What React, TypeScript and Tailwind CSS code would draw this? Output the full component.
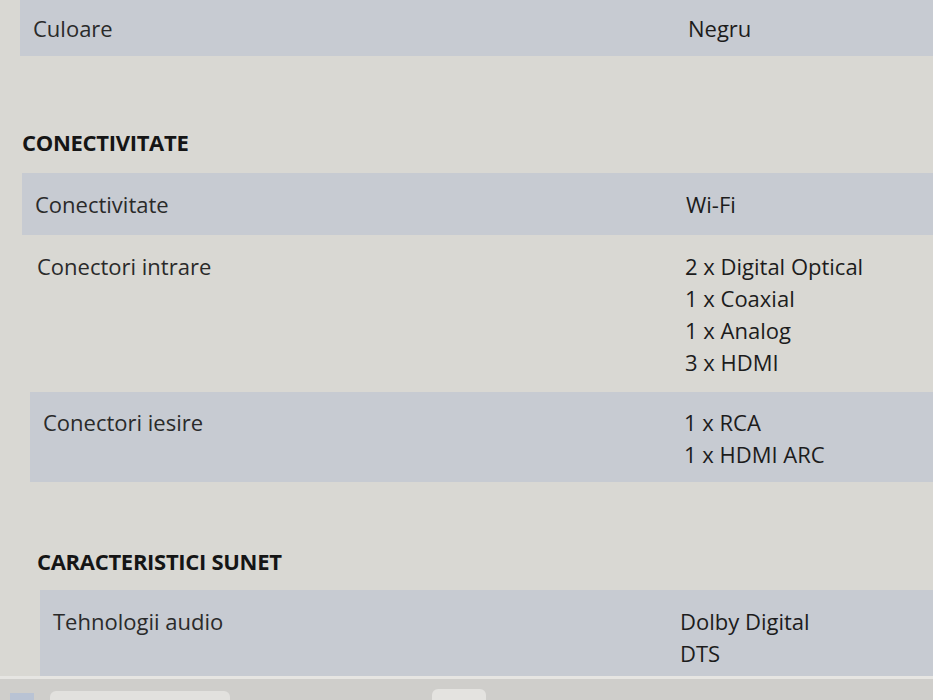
import React from 'react';

type Spec = {
  label: string;
  values: string[];
  shaded: boolean;
  indent: string;
  labelCol: string;
  pad: string;
};

const font = { fontFamily: '"Open Sans", "Noto Sans", sans-serif' };

const SpecRow: React.FC<{ spec: Spec }> = ({ spec }) => (
  <div className={`flex ${spec.pad} ${spec.indent} ${spec.shaded ? 'bg-[#c7cbd2]' : ''}`}>
    <div className={`${spec.labelCol} shrink-0 pl-[13px] text-[22px] leading-[32px] text-[#2a2a2a]`}>
      {spec.label}
    </div>
    <div className="flex flex-col text-[22px] leading-[32px] text-[#1c1c1c]">
      {spec.values.map((v) => (
        <span key={v}>{v}</span>
      ))}
    </div>
  </div>
);

export default function App() {
  return (
    <div className="h-[700px] w-full overflow-hidden bg-[#d9d8d3] flex flex-col" style={font}>
      <div className="h-[676px] shrink-0 overflow-hidden">
        <SpecRow
          spec={{
            label: 'Culoare',
            values: ['Negru'],
            shaded: true,
            indent: 'ml-[20px]',
            labelCol: 'w-[668px]',
            pad: 'h-[56px] pt-[12px]',
          }}
        />

        <h2 className="mt-[70px] ml-[22px] text-[22px] leading-[32px] font-bold text-[#151515] tracking-[-0.3px]">
          CONECTIVITATE
        </h2>

        <div className="mt-[15px]">
          <SpecRow
            spec={{
              label: 'Conectivitate',
              values: ['Wi-Fi'],
              shaded: true,
              indent: 'ml-[22px]',
              labelCol: 'w-[664px]',
              pad: 'py-[15px]',
            }}
          />
          <SpecRow
            spec={{
              label: 'Conectori intrare',
              values: ['2 x Digital Optical', '1 x Coaxial', '1 x Analog', '3 x HDMI'],
              shaded: false,
              indent: 'ml-[24px]',
              labelCol: 'w-[661px]',
              pad: 'pt-[15px] pb-[14px]',
            }}
          />
          <SpecRow
            spec={{
              label: 'Conectori iesire',
              values: ['1 x RCA', '1 x HDMI ARC'],
              shaded: true,
              indent: 'ml-[30px]',
              labelCol: 'w-[654px]',
              pad: 'pt-[14px] pb-[12px]',
            }}
          />
        </div>

        <h2 className="mt-[63px] ml-[37px] text-[22px] leading-[32px] font-bold text-[#151515] tracking-[-0.3px]">
          CARACTERISTICI SUNET
        </h2>

        <div className="mt-[13px]">
          <SpecRow
            spec={{
              label: 'Tehnologii audio',
              values: ['Dolby Digital', 'DTS', 'Dolby Pro Logic II'],
              shaded: true,
              indent: 'ml-[40px]',
              labelCol: 'w-[640px]',
              pad: 'py-[15px]',
            }}
          />
        </div>
      </div>

      {/* laptop bezel / taskbar edge */}
      <div className="flex-1 border-t-[3px] border-[#e6e5e2] bg-[#cfcecb] relative">
        <div className="absolute left-[50px] top-[12px] h-[12px] w-[180px] rounded-t-md bg-[#e2e1de]" />
        <div className="absolute left-[432px] top-[10px] h-[14px] w-[54px] rounded-t-md bg-[#e4e3e0]" />
        <div className="absolute left-[10px] top-[14px] h-[10px] w-[24px] bg-[#b9c3d4]" />
      </div>
    </div>
  );
}
